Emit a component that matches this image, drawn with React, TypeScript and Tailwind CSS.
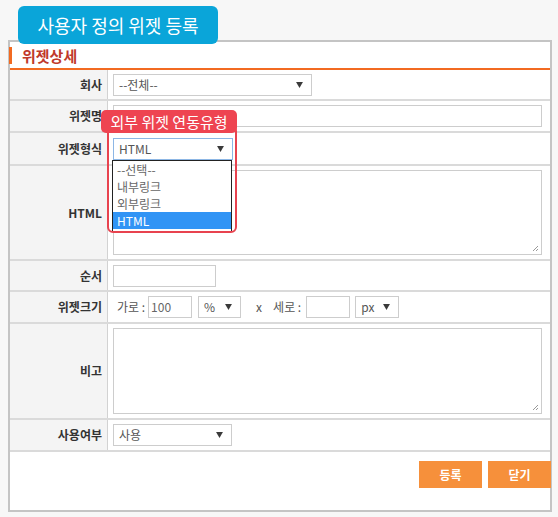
// 사용자 정의 위젯 등록 — 위젯상세 폼 + 위젯형식 드롭다운 안내 콜아웃
import clsx from 'clsx'
import type { ReactNode } from 'react'

function Caret() {
  return (
    <svg width="7" height="6" viewBox="0 0 8 7" className="shrink-0">
      <path d="M0 0h8L4 7z" fill="#3a3a3a" />
    </svg>
  )
}

function Select({ value, className, focus }: { value: string; className?: string; focus?: boolean }) {
  return (
    <div
      className={clsx(
        'flex h-[22px] items-center justify-between border bg-white pl-[5px] pr-[8px] text-[12px] leading-none text-[#555]',
        focus ? 'border-[#8db7e5]' : 'border-[#cdcdcd]',
        className,
      )}
    >
      <span>{value}</span>
      <Caret />
    </div>
  )
}

function TextArea({ className }: { className?: string }) {
  return (
    <div className={clsx('relative border border-[#cdcdcd] bg-white', className)}>
      {/* resize grip */}
      <svg width="7" height="7" viewBox="0 0 7 7" className="absolute bottom-[2px] right-[2px]">
        <path d="M6 1L1 6M6 4L4 6" stroke="#9a9a9a" strokeWidth="1" />
      </svg>
    </div>
  )
}

function Row({ label, h, children }: { label: string; h: string; children: ReactNode }) {
  return (
    <div className={clsx('flex border-b-2 border-[#dadada]', h)}>
      <div className="flex w-[98px] shrink-0 items-center justify-end border-r border-[#d2d2d2] bg-[#f4f4f4] pr-[5px] text-[12px] font-bold text-[#333]">
        {label}
      </div>
      <div className="flex flex-1 items-center pl-[5px] pr-[8px]">{children}</div>
    </div>
  )
}

export default function App() {
  return (
    <div className="h-[517px] w-[558px] overflow-hidden bg-[#f7f7f7] pt-[6px] font-['Noto_Sans_CJK_KR',sans-serif]">
      <div className="relative z-10 ml-[18px] flex h-[38px] w-[200px] items-center justify-center rounded-[6px] bg-[#0aa5d9] text-[18px] text-white">
        사용자 정의 위젯 등록
      </div>

      <div className="relative -mt-[4px] ml-[8px] h-[472px] w-[544px] border-2 border-[#c4c4c4] bg-white">
        {/* 헤더 */}
        <div className="flex h-[28px] items-center border-b-2 border-[#f26a21]">
          <span className="ml-[-1px] h-[17px] w-[3px] bg-[#f26a21]" />
          <span className="ml-[10px] text-[15px] font-bold leading-none text-[#c0392b]">위젯상세</span>
        </div>

        <Row label="회사" h="h-[31px]">
          <Select value="--전체--" className="w-[199px]" />
        </Row>
        <Row label="위젯명" h="h-[32px]">
          <div className="h-[22px] w-full border border-[#cdcdcd] bg-white" />
        </Row>
        <Row label="위젯형식" h="h-[33px]">
          <Select value="HTML" className="w-[120px]" focus />
        </Row>
        <Row label="HTML" h="h-[95px]">
          <TextArea className="h-[85px] w-full" />
        </Row>
        <Row label="순서" h="h-[31px]">
          <div className="h-[22px] w-[103px] border border-[#cdcdcd] bg-white" />
        </Row>
        <Row label="위젯크기" h="h-[32px]">
          <div className="flex items-center text-[12px] leading-none text-[#555]">
            <span className="ml-[4px]">가로 :</span>
            <div className="ml-[3px] flex h-[22px] w-[44px] items-center border border-[#cdcdcd] bg-white pl-[2px] text-[#666]">
              100
            </div>
            <Select value="%" className="ml-[6px] w-[43px]" />
            <span className="ml-[15px]">x</span>
            <span className="ml-[11px]">세로 :</span>
            <div className="ml-[5px] h-[22px] w-[44px] border border-[#cdcdcd] bg-white" />
            <Select value="px" className="ml-[5px] w-[44px]" />
          </div>
        </Row>
        <Row label="비고" h="h-[96px]">
          <TextArea className="h-[86px] w-full" />
        </Row>
        <Row label="사용여부" h="h-[32px]">
          <Select value="사용" className="w-[119px]" />
        </Row>

        {/* 버튼 */}
        <div className="-mr-[1px] flex justify-end gap-[6px] pt-[9px]">
          <button className="h-[27px] w-[63px] bg-[#f6903b] text-[12px] font-bold text-white">등록</button>
          <button className="h-[27px] w-[63px] bg-[#f6903b] text-[12px] font-bold text-white">닫기</button>
        </div>

        {/* 위젯형식 드롭다운 (펼침) */}
        <div className="absolute left-[102px] top-[118px] z-10 w-[120px] border border-[#222] bg-white pb-[2px] text-[12px] leading-none text-[#666]">
          <div className="flex h-[17px] items-center pl-[4px]">--선택--</div>
          <div className="flex h-[17px] items-center pl-[4px]">내부링크</div>
          <div className="flex h-[17px] items-center pl-[4px]">외부링크</div>
          <div className="flex h-[17px] items-center bg-[#3194f5] pl-[4px] text-white">HTML</div>
        </div>

        {/* 안내 콜아웃 */}
        <div className="absolute left-[97px] top-[83px] z-20 h-[108px] w-[130px] rounded-[6px] border-2 border-[#e8434f]" />
        <div className="absolute left-[91px] top-[68px] z-30 flex h-[23px] w-[136px] items-center justify-center rounded-[5px] bg-[#ee4451] text-[15px] leading-none text-white">
          외부 위젯 연동유형
        </div>
      </div>
    </div>
  )
}
